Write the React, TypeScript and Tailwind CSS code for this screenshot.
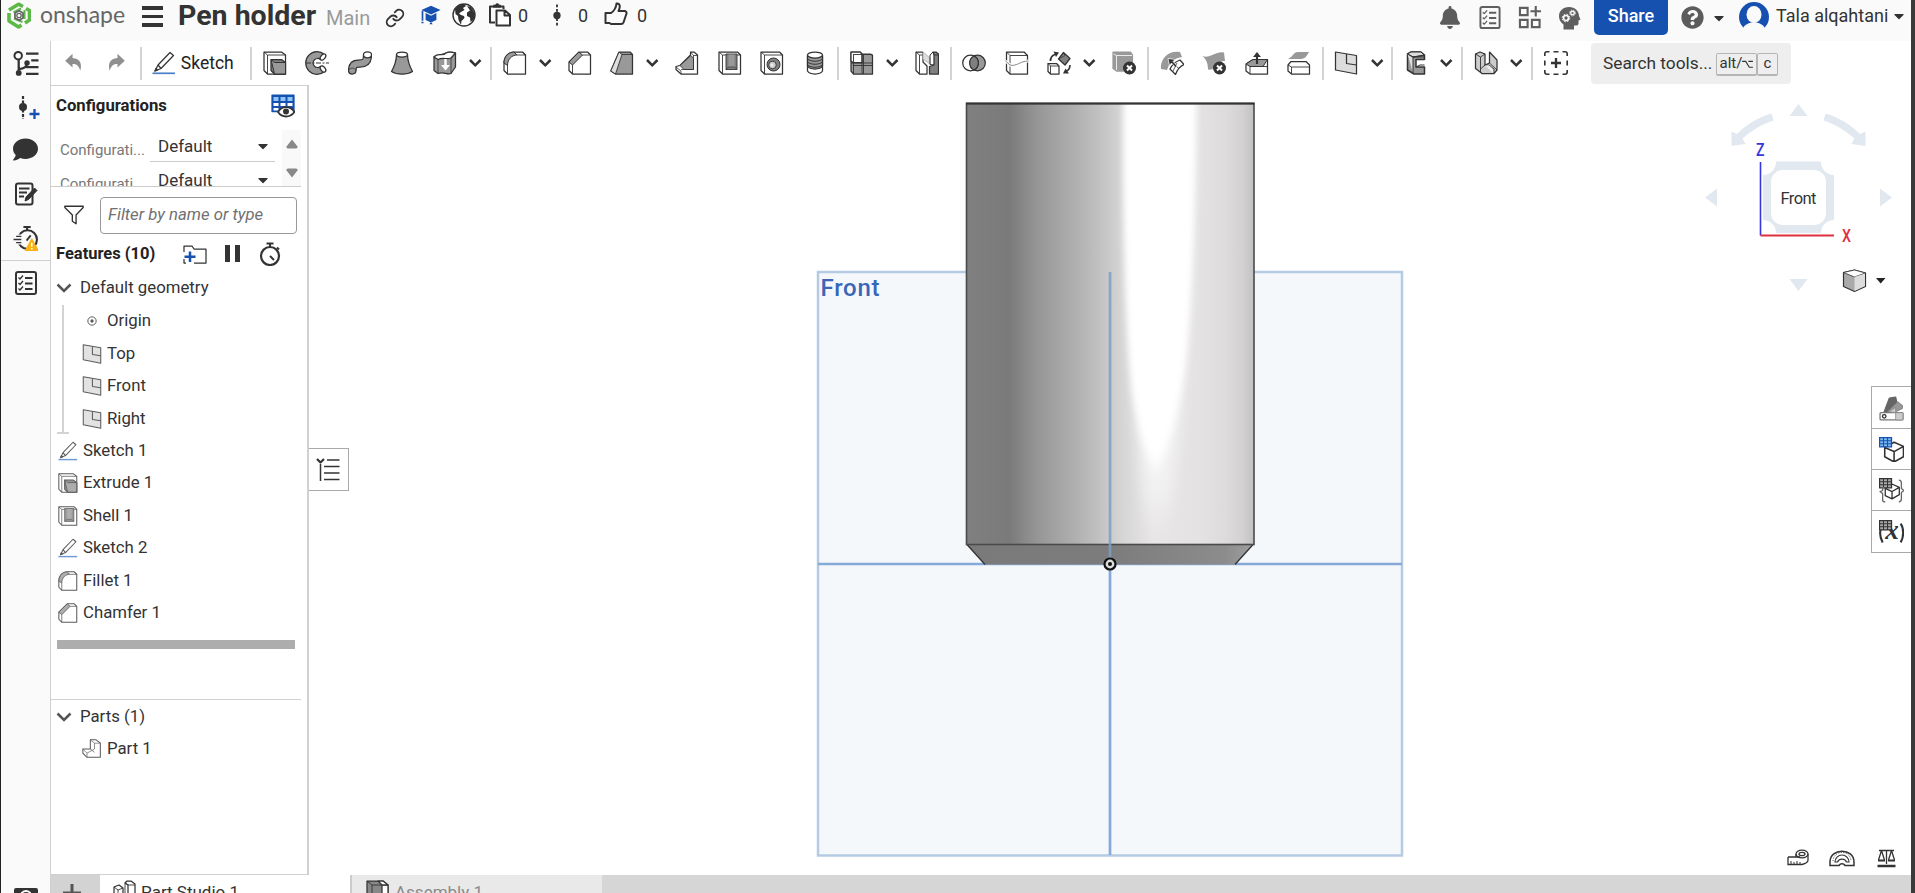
import React from "react";
import { FaBell, FaComment, FaQuestionCircle, FaCaretDown } from "react-icons/fa";
import { Link } from "lucide-react";

type Kids = { children: React.ReactNode };
const D = "#333333";
const G = "#999999";

function Ico({ children, cls = "h-6 w-6" }: Kids & { cls?: string }) {
  return (
    <svg viewBox="0 0 24 24" className={`${cls} shrink-0`} fill="none" stroke={D} strokeWidth="1.25" strokeLinejoin="round">
      {children}
    </svg>
  );
}

const Pencil = () => (
  <>
    <path d="M3 20 L6 14 L18 1.5 L21.500 4.500 L9 17.500 Z M6 14 L9 17.500" fill="#fff" />
    <path d="M3 20 L4 17.500 L5.500 19 Z" fill={D} />
    <path d="M0.500 22.300 H23" stroke="#4a7fcb" strokeWidth="1.700" />
  </>
);
const Extrude = () => (
  <>
    <path d="M1 1 H18.500 L22.500 4 V23 H4.500 L1 19.500 Z" fill="#fff" />
    <path d="M1 1 L4.500 4 H22.500 M4.500 4 V23" strokeWidth=".9" />
    <path d="M8 8.500 H18.500 L22.500 11.500 V23 H11.500 L8 19.500 Z" fill="#808080" />
    <path d="M8 8.500 L11.500 11.500 H22.500 V23 H11.500 Z" fill={G} strokeWidth="1" />
  </>
);
const Revolve = () => (
  <>
    <path d="M19.500 3.500 A11.300 11.300 0 1 0 19.500 20.500 C21.500 18.500 18.500 14 15.500 15.500 A4.500 4.500 0 1 1 15.500 8.500 C18 10 21.500 5.500 19.500 3.500 Z" fill={G} />
    <ellipse cx="18" cy="6" rx="2.200" ry="3.500" transform="rotate(40 18 6)" fill="#fff" />
    <ellipse cx="18" cy="18" rx="2.200" ry="3.500" transform="rotate(-40 18 18)" fill="#fff" />
    <path d="M1 12 H24" strokeDasharray="5 1.500 2 1.500" strokeWidth="1" />
  </>
);
const Sweep = () => (
  <>
    <path d="M15.500 4 C15.500 9 15 9 10 9 C3 9 0.500 13 0.500 20 C1 24 7.500 24 8 20 C8 16 8.500 16 12 16 C20 16 23.500 12 23.500 4 Z" fill={G} />
    <ellipse cx="19.500" cy="3.800" rx="4" ry="3" fill="#fff" />
    <path d="M0.800 19 C2 16.500 7 16.500 8 19.500" strokeWidth=".8" />
  </>
);
const Loft = () => (
  <>
    <path d="M6.500 3.500 C6.500 10 4.500 15 1.500 20.500 C7 24 17 24 22.500 20.500 C19.500 15 17.500 10 17.500 3.500 Z" fill={G} />
    <ellipse cx="12" cy="3.500" rx="5.500" ry="2.500" fill="#fff" />
  </>
);
const Thicken = () => (
  <>
    <path d="M1 6 C5 1 9 6 13 2 C16 0 19 1 22.500 2 L22.500 16 L18 22.500 C14 24 10 20 5 22.500 L1 19.500 Z" fill={G} />
    <path d="M1 6 C5 1 9 6 13 2 C16 0 19 1 22.500 2 L18 7 C14 9 10 6 5 8.500 Z" fill="#fff" />
    <path d="M5 8.500 V22.500 M18 7 V22.500" strokeWidth=".8" />
    <path d="M12.500 8 V16" stroke="#fff" strokeWidth="2.400" />
    <path d="M8 14 H17 L12.500 19.500 Z" fill="#fff" stroke="none" />
  </>
);
const Fillet = () => (
  <>
    <path d="M1 12 C1 5 6 1 11 1 H19.500 L22.500 4 V23 H4.500 L1 19.500 Z" fill="#fff" />
    <path d="M1 12 C1 5 6 1 11 1 L14 4 C9 4 4.500 8 4.500 14.500 Z" fill={G} strokeWidth="1" />
    <path d="M4.500 14.500 V23 M14 4 H22.500 M19.500 1 L22.500 4" strokeWidth=".9" />
  </>
);
const Chamfer = () => (
  <>
    <path d="M1 11 L11 1 H19.500 L22.500 4 V23 H4.500 L1 19.500 Z" fill="#fff" />
    <path d="M1 11 L11 1 L14.500 4 L4.500 14 Z" fill={G} strokeWidth="1" />
    <path d="M4.500 14 V23 M14.500 4 H22.500" strokeWidth=".9" />
  </>
);
const Draft = () => (
  <>
    <path d="M9 1 H20 L22.500 3.500 V23 H5.500 L0.800 20 Z" fill={G} />
    <path d="M9 1 L12 3.500 L5.500 23 L0.800 20 Z" fill="#ddd" strokeWidth=".9" />
    <path d="M12 3.500 H22.500" strokeWidth=".9" />
  </>
);
const Rib = () => (
  <>
    <path d="M15.500 1 L19 1 L22.500 4 V23 H6 L1 18.500 V15.500 L5 14.500 L15.500 4 Z" fill="#fff" />
    <path d="M5 14.500 L16 4.500 L18.500 7.500 V18.500 H9 Z" fill={G} strokeWidth=".9" />
    <path d="M15.500 1 L18.500 4.500 H22.500 M1 16 L6 20 V23 M18.500 4 V18.500 H6" strokeWidth=".8" />
  </>
);
const Shell = () => (
  <>
    <path d="M1 1 H19.500 L22.500 4 V23 H4.500 L1 19.500 Z" fill="#fff" />
    <path d="M1 1 L4.500 4 H22.500 M4.500 4 V23" strokeWidth=".9" />
    <path d="M8 3 H19 V18.500 H8 Z" fill="#808080" strokeWidth=".9" />
    <path d="M10.500 3.500 H16.500 V16 H10.500 Z" fill={G} stroke="none" />
    <path d="M8 18.500 L10.500 16 H16.500 L19 18.500" strokeWidth=".7" />
  </>
);
const Hole = () => (
  <>
    <path d="M1 1 H19.500 L22.500 4 V23 H4.500 L1 19.500 Z" fill="#fff" />
    <path d="M1 1 L4.500 4 H22.500 M4.500 4 V23" strokeWidth=".9" />
    <circle cx="13.500" cy="13.500" r="6.500" fill="#808080" strokeWidth="1" />
    <circle cx="12.500" cy="14" r="3.800" fill="#ccc" strokeWidth=".9" />
    <circle cx="12" cy="14" r="1.500" fill="#eee" stroke="none" />
  </>
);
const Thread = () => (
  <>
    <path d="M4.500 4 V20 C7 24 17 24 19.500 20 V4 Z" fill="#fff" />
    <path d="M4.500 5 V15 C7 19 17 19 19.500 15 V5 Z" fill={G} />
    <ellipse cx="12" cy="4" rx="7.500" ry="3" fill="#fff" />
    <path d="M4.500 8 C8 11 16 11 19.500 8 M4.500 11 C8 14 16 14 19.500 11 M4.500 14 C8 17 16 17 19.500 14" strokeWidth="1" />
  </>
);
const Pattern = () => (
  <>
    <path d="M1 1 H10 L12 3 H20.500 L22.500 4.500 V23 H3.500 L1 20 Z" fill={G} />
    <path d="M1 1 H10 L12 3 V11.500 H3 L1 10 Z" fill="#fff" />
    <path d="M12 3 V23 M3 3.500 H22.500 M1 12 H22.500 M3 14.500 H22.500 M3.500 3.500 V23 M13.500 3 V23" strokeWidth=".9" />
  </>
);
const Mirror = () => (
  <>
    <path d="M1 1 H7 L8 2 V11 L12 15 V23 H4.500 L1 19.500 Z" fill="#fff" />
    <path d="M1 1 L4.500 4 V23 M4.500 4 H8 M8 11 L12 15" strokeWidth=".9" />
    <path d="M8 1 L15 7 V13 L8 8 Z" fill="#ddd" stroke="#aaa" strokeWidth=".8" />
    <path d="M18 1 H21 L23.500 3 V23 H14.500 V15.500 L19 14 V4 Z" fill="#808080" />
    <path d="M18 1 L15 4 V13.500 L19 14 M19 4 H23.500" strokeWidth="1" />
  </>
);
const Bool = () => (
  <>
    <circle cx="15.500" cy="12" r="7.800" fill={G} />
    <circle cx="8.500" cy="12" r="7.800" fill="#fff" />
    <path d="M12 5 A7.800 7.800 0 0 1 12 19 A7.800 7.800 0 0 1 12 5 Z" fill="#808080" />
  </>
);
const Split = () => (
  <>
    <path d="M1.500 1 H19 L22.500 4.500 V23 H5 L1.500 19.500 Z" fill="#fff" />
    <path d="M1.500 1 L5 4.500 H22.500 M5 4.500 V23" strokeWidth=".9" />
    <path d="M0.500 10 L5 14 C11 16 15 10 23.500 10" stroke="#fff" strokeWidth="3" />
    <path d="M0.500 10 L5 14 C11 16 15 10 23.500 10" stroke="#888" strokeWidth="1" />
  </>
);
const Transform = () => (
  <>
    <path d="M1 12.500 H9.500 L12 15 V23 H3.500 L1 20.500 Z" fill="#fff" />
    <path d="M1 12.500 L3.500 15 H12 M3.500 15 V23" strokeWidth=".9" />
    <path d="M16.500 1.500 L23 7.500 L18 14 L11.500 8 Z" fill="#808080" />
    <path d="M16.500 1.500 L18 4.500 L11.500 8" strokeWidth=".7" />
    <path d="M3.500 10 C3.500 6 5 4.500 8 3.500" strokeWidth="1.800" />
    <path d="M6.500 0.500 L12 1.500 L9 6 Z" fill={D} stroke="none" />
    <path d="M23 14 C23 17 22 19 19.500 20" strokeWidth="1.600" />
    <path d="M16 22.500 L18.500 17.500 L22 22.500 Z" fill={D} stroke="none" />
  </>
);
const Cross = () => (
  <>
    <circle cx="17.500" cy="17" r="6.500" fill={D} stroke="none" />
    <path d="M15 14.500 L20 19.500 M20 14.500 L15 19.500" stroke="#fff" strokeWidth="2" />
  </>
);
const DeletePart = () => (
  <>
    <path d="M1 1 H18.500 L20.500 4 V20 H4.500 L1 17.500 Z" fill={G} stroke={G} />
    <path d="M1.500 3 L4.500 4.500 H20 M4.500 4.500 V19" stroke="#fff" strokeWidth=".8" />
    <Cross />
  </>
);
const MoveFace = () => (
  <>
    <path d="M1 18 C0 8 8 -1 20 1 L22 6 C19 6.500 17 7 15 8.500 L8 7 L9 14 L7 19 Z" fill={G} stroke="none" />
    <path d="M10 18 C12 13.500 15 11 20 9 L24 13.500 C20 15 17.500 18 15.500 23.500 Z" fill="#fff" />
    <path d="M14.500 13 L19 18 M12.500 21 L17 12" strokeWidth=".8" />
    <path d="M8 7.500 L15 8.500 L13 10.500 L17 15 L15.500 16.500 L11.500 12 L9.500 14.500 Z" fill={D} stroke="#fff" strokeWidth=".6" />
  </>
);
const DeleteFace = () => (
  <>
    <path d="M0.500 5 C8 8 13 0 22 1.500 L23 10 C14 10 15 20 6 18.500 C6 12 4 8 0.500 5 Z" fill={G} stroke="none" />
    <Cross />
  </>
);
const Extract = () => (
  <>
    <path d="M1 13 L8 8.500 H22.500 V23 H5 L1 20 Z" fill="#fff" />
    <path d="M1 13 L8 8.500 H22.500 L18 15.500 H5 Z" fill={G} strokeWidth="1" />
    <path d="M5 15.500 V23 M5 15.500 H22.500" strokeWidth=".9" />
    <path d="M12 13 V5" strokeWidth="2.200" />
    <path d="M8 6 L12 1 L16 6 Z" fill={D} stroke="none" />
  </>
);
const Replace = () => (
  <>
    <path d="M1 8 C7 5 6 1 11 1 H22 C19 6 18 8 13 8 Z" fill={G} stroke="none" />
    <path d="M1 14 L4 10.500 H19 L22.500 14 V23 H4.500 L1 20 Z" fill="#fff" />
    <path d="M1 14 L4.500 16 H22.500 M4.500 16 V23" strokeWidth=".9" />
  </>
);
const Plane = () => (
  <>
    <path d="M1.500 1 L22.500 4.500 V23 L1.500 19 Z" fill="#dcdcdc" />
    <path d="M12.500 3 V12.500 L22.500 14" />
  </>
);
const Sheet = () => (
  <>
    <path d="M3.500 3 L7 1 H17 L20.500 4 V8.500 H12 V16 H20.500 V23 H10 L3.500 19 Z" fill={G} strokeWidth="1.500" />
    <path d="M3.500 3 L9 6 V22 M9 6 L20.500 4.500 M3.500 3 L7 1 H17 L20 4 L9 6 Z" fill="#ddd" strokeWidth="1" />
    <path d="M9 6 H20.500 M12 16 L16 14 H20.500" strokeWidth="1" />
  </>
);
const Frame = () => (
  <>
    <path d="M1.500 3 L6 1 L11 3 V14 L15.500 12 V1 L23 9 V19 L20 22.500 H8 L1.500 17.500 Z" fill="#ccc" />
    <path d="M1.500 3 L6.500 6 V21 M6.500 6 L11 3 M6.500 18 L11 14 H15 L20 18 V22.500 M15.500 12 L23 19" strokeWidth=".9" />
    <path d="M11 14.500 H15 L19 18.500 V22 Z" fill="#eee" stroke="none" />
  </>
);
const AddTool = () => (
  <>
    <path d="M0.800 5 V3 Q0.800 .8 3 .8 H5.500 M9.500 .8 H14.500 M18.500 .8 H21 Q23.200 .8 23.200 3 V5 M23.200 9.500 V14.500 M23.200 19 V21 Q23.200 23.200 21 23.200 H18.500 M14.500 23.200 H9.500 M5.500 23.200 H3 Q.8 23.200 .8 21 V19 M.8 14.500 V9.500" strokeWidth="1.600" />
    <path d="M12 7 V17 M7 12 H17" strokeWidth="2.300" />
  </>
);
const PartIcon = () => (
  <>
    <path d="M10 1 H17 L22 5 V22 H6 L1 17 V12 H10 Z" fill="#fff" />
    <path d="M10 1 L15 5 H22 M15 5 V12 L6 17 L1 12 M6 17 V22 M10 12 L15 16" strokeWidth=".8" />
  </>
);
const Undo = () => <path d="M3.500 9.500 L11.500 2 V6.500 C20 7 22 13 20 20.500 C18.500 15 16 13 11.500 13 V17 Z" fill="#8f8f8f" stroke="none" />;
const Checklist = ({ c = D }: { c?: string }) => (
  <g stroke={c}>
    <rect x="2" y="1" width="20" height="22" rx="2" strokeWidth="2" />
    <path d="M11 7 H18.500 M11 12.500 H18.500 M11 18 H18.500" strokeWidth="2" />
    <path d="M4.500 6.500 L6 8 L9 4.500 M4.500 12 L6 13.500 L9 10 M4.500 17.500 L6 19 L9 15.500" strokeWidth="1.300" />
  </g>
);
const Stopwatch = () => (
  <>
    <circle cx="12" cy="14" r="9" strokeWidth="2.200" />
    <path d="M8.500 1.500 H15.500 M12 1 V5 M19 5.500 L21 7.500" strokeWidth="2" />
    <path d="M12 14 L16 18" strokeWidth="2" />
  </>
);

const Slot = ({ children }: Kids) => (
  <div className="flex w-[42.5px] shrink-0 items-center justify-center"><Ico>{children}</Ico></div>
);
const Chev = () => (
  <div className="flex w-[22.5px] shrink-0 items-center">
    <svg viewBox="0 0 18.5 12" className="h-3 w-[18.5px]" fill="none" stroke={D} strokeWidth="2.500"><path d="M4 3 L9.250 8.300 L14.500 3" /></svg>
  </div>
);
const Sep = () => <div className="flex w-[4.8px] shrink-0 justify-center"><div className="h-[33px] w-[2px] bg-[#d3d3d3]" /></div>;

function Header() {
  return (
    <header className="flex h-[41px] shrink-0 bg-[#fafafa] text-[#333]">
      <div className="flex h-[33px] flex-1 items-center">
        <svg viewBox="0 0 24 27" className="ml-[6px] h-[27px] w-6 shrink-0 -mt-[3px]" fill="none" strokeLinejoin="round">
          <path d="M2 8 L11.500 2.200 L16 4.500 M19 6.500 L22.500 8.500 V18 L18 21 M14.500 23 L11.500 25 L2 19 V11" stroke="#5cb947" strokeWidth="3.600" />
          <path d="M6.500 10.500 L14 6.500 M17.500 8 V17 M15.500 20 L7 16.500" stroke="#5cb947" strokeWidth="2" />
          <path d="M8 11 L12 8.800 L16 11 V16 L12 18.300 L8 16 Z" stroke="#666" strokeWidth="1.800" />
          <circle cx="12" cy="13.500" r="2.200" stroke="#666" strokeWidth="1.300" />
        </svg>
        <span className="ml-[9px] -mt-[5px] w-[102px] shrink-0 font-['Lato'] text-[23px] leading-[30px] text-[#666]">onshape</span>
        <div className="flex w-[21px] shrink-0 flex-col gap-[5px]"><i className="h-[3.500px] bg-[#333]" /><i className="h-[3.500px] bg-[#333]" /><i className="h-[3.500px] bg-[#333]" /></div>
        <span className="ml-[15px] mt-[-2px] w-[148px] shrink-0 whitespace-nowrap text-[28.5px] leading-[34px] font-bold">Pen holder</span>
        <span className="w-[58px] shrink-0 text-[20px] text-[#999] mt-[3px]">Main</span>
        <Link className="ml-px h-5 w-5 shrink-0 text-[#333] mt-[2px]" strokeWidth={2.2} />
        <Ico cls="ml-[14px] -mt-[4px] h-[20px] w-6">
          <path d="M12 1 L23.500 6 L12 11.500 L0.500 6 Z" fill="#1651b0" stroke="none" />
          <path d="M5.500 9.500 V18 L12 21 L18.500 18 V9.500 L12 13 Z M12 20 L14 23 H10 Z" fill="#1651b0" stroke="none" />
          <path d="M1.800 7 V19 M0.500 21 H3" stroke="#1651b0" strokeWidth="2" />
        </Ico>
        <Ico cls="ml-[9px] h-6 w-6 -mt-[3px]">
          <circle cx="12" cy="12" r="11" fill="#fff" strokeWidth="1.400" />
          <path d="M3 6 C5 3 8 1 12 1 L14 3 L11 5 L12.500 7 L9 9 L7 10.500 L9 12 L12 13 L12.500 15 L9.500 18 L9 22 L6.500 17 L6 13 L3.500 11 Z M15 3 L19 4 L21.500 8 L23 12 L21.500 17 L18.500 19 L18 14.500 L15 13 L15 9.500 L18 7.500 Z" fill={D} stroke="none" />
        </Ico>
        <Ico cls="ml-3 h-6 w-6 -mt-[3px]">
          <path d="M7 19.500 H2 V3.500 H6 M12 3.500 H15.500 V6" strokeWidth="2" />
          <path d="M5.500 4.500 V2 H7.500 A1.800 1.800 0 0 1 11 2 H12.500 V4.500 Z" fill={D} strokeWidth=".6" />
          <path d="M8.500 7.500 H17 L22 12 V22.500 H8.500 Z M16.500 7.500 V12.500 H22" fill="#fff" strokeWidth="2" />
        </Ico>
        <span className="ml-[6px] w-[28px] text-[18px] -mt-[2px]">0</span>
        <Ico cls="h-[23px] w-[22px] -mt-[3px]"><path d="M12 0 V24" strokeDasharray="3 2" strokeWidth="2" /><circle cx="12" cy="12" r="4" fill={D} stroke="none" /></Ico>
        <span className="ml-[10px] w-[26px] text-[18px] -mt-[2px]">0</span>
        <Ico cls="h-6 w-6 -mt-[5px]"><path d="M1.500 11 H7 C10 9 12 6 12.500 1.500 C15.500 1 17 4 14.500 9 H21 C23.500 10 22.500 12 22 13 L19.500 20.500 C19 22 18 22 17 22 H7 L5.500 21 H1.500 Z" strokeWidth="2" /></Ico>
        <span className="ml-[9px] text-[18px] -mt-[2px]">0</span>
      </div>
      <div className="flex h-[35px] items-center text-[#5c5c5c]">
        <FaBell className="h-[23px] w-5 shrink-0" />
        <Ico cls="ml-[18px] h-[23px] w-6"><Checklist c="#5f5f5f" /></Ico>
        <svg viewBox="0 0 24 24" className="ml-4 h-[23px] w-6" fill="none" stroke="#5f5f5f" strokeWidth="2.200"><path d="M1.500 2 H9.500 V9.500 H1.500 Z M1.500 14.500 H9.500 V22 H1.500 Z M14 14.500 H22 V22 H14 Z M18 0 V11 M12.500 5.500 H23.500" /></svg>
        <svg viewBox="0 0 24 24" className="ml-[15px] h-[24px] w-[24px]" fill="none" stroke="#fafafa">
          <path d="M12 1 C18 1 22 5 22 10 L23.500 13.500 L21.500 14.500 V18 Q21 19.500 19 19.500 H17 V23.500 H6.500 V18.500 C3 16 2 13 2 10 C2 5 6 1 12 1 Z" fill="#5f5f5f" stroke="none" />
          <circle cx="9" cy="12" r="2.500" strokeWidth="1.700" /><circle cx="9" cy="12" r="3.800" strokeWidth="1" strokeDasharray="1.600 1.400" />
          <circle cx="15.500" cy="7" r="1.800" strokeWidth="1.400" /><circle cx="15.500" cy="7" r="2.900" strokeWidth=".9" strokeDasharray="1.300 1" />
        </svg>
        <div className="ml-[13px] flex h-full w-[74px] items-center justify-center rounded-b-[5px] bg-[#1651b0] pb-[3px] text-[18px] font-medium text-white">Share</div>
        <FaQuestionCircle className="ml-[13px] h-[23px] w-[23px]" />
        <FaCaretDown className="ml-[7px] h-4 w-4 text-[#333]" />
        <svg viewBox="0 0 30 30" className="ml-[12px] h-[30px] w-[30px] -mt-px"><circle cx="15" cy="15" r="15" fill="#1651b0" /><ellipse cx="15" cy="12.500" rx="7.500" ry="8.500" fill="#fafafa" /><path d="M3 30 C4 22 10 21 15 20 C20 21 26 22 27 30 Z" fill="#fafafa" /></svg>
        <span className="ml-[7px] w-[115px] shrink-0 whitespace-nowrap text-[18px] text-[#333] -mt-[3px]">Tala alqahtani</span>
        <FaCaretDown className="mr-[4px] h-4 w-4 text-[#333] -mt-1" />
      </div>
    </header>
  );
}

function Toolbar() {
  return (
    <div className="flex h-[44px] shrink-0 items-center">
      <div className="flex w-11 shrink-0 justify-center"><Ico cls="h-[22px] w-6"><Undo /></Ico></div>
      <div className="flex w-11 shrink-0 justify-center"><Ico cls="h-[22px] w-6 -scale-x-100"><Undo /></Ico></div>
      <Sep />
      <div className="flex w-[105px] shrink-0 items-center pl-[8px]"><Ico><Pencil /></Ico><span className="ml-[5px] text-[17.5px] text-[#222]">Sketch</span></div>
      <Sep />
      <Slot><Extrude /></Slot><Slot><Revolve /></Slot><Slot><Sweep /></Slot><Slot><Loft /></Slot><Slot><Thicken /></Slot><Chev />
      <Sep />
      <Slot><Fillet /></Slot><Chev /><Slot><Chamfer /></Slot><Slot><Draft /></Slot><Chev />
      <Slot><Rib /></Slot><Slot><Shell /></Slot><Slot><Hole /></Slot><Slot><Thread /></Slot>
      <Sep />
      <Slot><Pattern /></Slot><Chev /><Slot><Mirror /></Slot>
      <Sep />
      <Slot><Bool /></Slot><Slot><Split /></Slot><Slot><Transform /></Slot><Chev /><Slot><DeletePart /></Slot>
      <Sep />
      <Slot><MoveFace /></Slot><Slot><DeleteFace /></Slot><Slot><Extract /></Slot><Slot><Replace /></Slot>
      <Sep />
      <Slot><Plane /></Slot><Chev />
      <Sep />
      <Slot><Sheet /></Slot><Chev />
      <Sep />
      <Slot><Frame /></Slot><Chev />
      <Sep />
      <Slot><AddTool /></Slot>
      <div className="ml-[14px] flex h-[41px] w-[200px] items-center rounded bg-[#eeeeee] pl-[12px] text-[#333]">
        <span className="w-[113px] shrink-0 whitespace-nowrap text-[17.3px]">Search tools...</span>
        <kbd className="mt-[3px] flex h-[23px] w-[41px] items-center justify-center rounded-[2px] border border-b-2 border-[#b5b5b5] font-['Roboto'] text-[15px]">alt/<svg viewBox="0 0 12 10" className="h-[9px] w-[11px]" fill="none" stroke={D} strokeWidth="1.200"><path d="M0 1.500 H4 L8 8 H12 M7 1.500 H12" /></svg></kbd>
        <kbd className="mt-[3px] flex h-[23px] w-[21px] items-center justify-center rounded-[2px] border border-b-2 border-[#b5b5b5] font-['Roboto'] text-[15px]">c</kbd>
      </div>
    </div>
  );
}

const RailItem = ({ children, h }: Kids & { h: string }) => <div className={`flex items-center justify-center ${h}`}>{children}</div>;

function Rail() {
  return (
    <aside className="flex w-[50px] shrink-0 flex-col border-r border-[#d0d0d0] bg-[#fafafa]">
      <RailItem h="h-[44px]">
        <Ico cls="h-[25px] w-[26px]"><circle cx="4.500" cy="4.500" r="3.600" strokeWidth="1.900" /><circle cx="5" cy="21" r="2.800" fill={D} stroke="none" /><circle cx="13" cy="11.500" r="2.600" fill={D} stroke="none" /><path d="M5 8 V19 M13 11.500 C13 16 9 17 5 17.500 M12 2.500 H24 M17 9 H24 M12 15.500 H24 M12 22 H24" strokeWidth="2.200" /></Ico>
      </RailItem>
      <RailItem h="h-[43px]">
        <Ico cls="ml-1 h-6 w-6"><path d="M7 1 V24" strokeDasharray="3 1.500" strokeWidth="2.200" /><circle cx="7" cy="12" r="4" fill={D} stroke="none" /><path d="M18.500 14 V24 M13.500 19 H23.500" stroke="#1651b0" strokeWidth="2.300" /></Ico>
      </RailItem>
      <RailItem h="h-[43px]"><FaComment className="h-[25px] w-[25px] text-[#333]" /></RailItem>
      <RailItem h="h-[46px]">
        <Ico><rect x="2" y="1.500" width="16.500" height="21" rx="2" strokeWidth="2" /><path d="M5 6.500 H15.500 M5 10.500 H13 M5 14.500 H10" strokeWidth="1.800" /><path d="M11 19 L12 15 L20.500 6 L23 8.500 L14.500 17.500 Z" fill={D} strokeWidth="1" /></Ico>
      </RailItem>
      <RailItem h="h-[42px]">
        <Ico cls="h-[25px] w-[25px]"><circle cx="14" cy="13" r="9" strokeWidth="2" /><path d="M10 1 H17 M13.500 1 V4" strokeWidth="2" /><path d="M13 14 L17 9" strokeWidth="1.800" /><path d="M3 10 H9 M0 13 H9 M3 16 H9" stroke="#fafafa" strokeWidth="3.500" /><path d="M3 10 H8 M0.500 13 H8 M3 16 H8" strokeWidth="1.300" /><path d="M18 12.500 L24 23.500 H12 Z" fill="#f9b212" stroke="#f9b212" /><path d="M18 16 V20 M18 21.200 V22.500" stroke="#fff" strokeWidth="1.500" /></Ico>
      </RailItem>
      <div className="mt-px h-px bg-[#d0d0d0]" />
      <RailItem h="h-[43px]"><Ico><Checklist /></Ico></RailItem>
      <div className="mt-auto flex h-[5px] justify-center overflow-hidden"><div className="flex h-5 w-6 justify-center rounded-t-[2px] bg-[#333]"><div className="mt-[2px] h-3 w-3 rounded-full border-2 border-white" /></div></div>
    </aside>
  );
}

const Row = ({ icon, label, nested }: { icon: React.ReactNode; label: string; nested?: boolean }) => (
  <div className={nested ? "flex h-[32.5px] items-center pl-[31px]" : "flex h-[32.5px] items-center pl-[7px]"}>
    <Ico cls="h-5 w-5 opacity-80">{icon}</Ico>
    <span className={nested ? "ml-[5px]" : "ml-[5px]"}>{label}</span>
  </div>
);

const ConfigRow = () => (
  <div className="flex h-[34px] shrink-0 items-center">
    <span className="w-[92px] pt-[9px] pl-[9px] text-[15px] leading-[18px] whitespace-nowrap text-[#777]">Configurati...</span>
    <div className="ml-[7px] flex h-[34px] w-[125px] items-center justify-between border-b border-[#ccc] pt-[3px] pr-[4px] pl-[8px] text-[17px]"><span>Default</span><FaCaretDown className="h-4 w-4" /></div>
  </div>
);

const DownArrow = () => <svg viewBox="0 0 16 12" className="h-3 w-4" fill="none" stroke="#555" strokeWidth="2.500"><path d="M1.500 2.500 L8 9 L14.500 2.500" /></svg>;

function Panel() {
  return (
    <section className="flex w-[258px] shrink-0 flex-col border-t border-r-2 border-b border-[#d0d0d0] bg-white text-[16.8px] text-[#333]">
      <div className="flex h-[41px] shrink-0 items-center justify-between pr-[12px] pb-[2px] pl-[5px] text-[16.7px] font-bold">
        <span className="text-[#222]">Configurations</span>
        <Ico><path d="M1 1 H23 V17.500 H1 Z" fill="#1651b0" stroke="#1651b0" /><path d="M2.500 3 H7.500 V7 H2.500 Z M9.500 3 H14.500 V7 H9.500 Z M16.500 3 H21.500 V7 H16.500 Z" fill="#8ec6f5" stroke="none" /><path d="M2.500 9 H7.500 V12 H2.500 Z M9.500 9 H14.500 V12 H9.500 Z M16.500 9 H21.500 V12 H16.500 Z M2.500 14 H7.500 V16.500 H2.500 Z" fill="#fff" stroke="none" /><path d="M7 18 C11 11.500 19 11.500 23.500 18 C19 24 11 24 7 18 Z" fill="#fff" strokeWidth="1.800" /><circle cx="15" cy="17.500" r="3" fill={D} stroke="none" /></Ico>
      </div>
      <div className="flex h-[60px] w-[250px] shrink-0 overflow-hidden border-b border-[#ccc]">
        <div className="flex w-[231px] flex-col pt-px"><ConfigRow /><ConfigRow /></div>
        <div className="mt-[3px] flex flex-1 flex-col items-center justify-between bg-[#f9f9f9] pt-[9px] pb-[8px]">
          <svg viewBox="0 0 12 9" className="h-[10px] w-3 fill-[#888]"><path d="M6 0 L11.500 7 Q12 9 10 9 H2 Q0 9 .5 7 Z" /></svg>
          <svg viewBox="0 0 12 9" className="h-[10px] w-3 fill-[#888]"><path d="M6 9 L11.500 2 Q12 0 10 0 H2 Q0 0 .5 2 Z" /></svg>
        </div>
      </div>
      <div className="flex h-[55px] shrink-0 items-center pt-px pl-[13px]">
        <Ico cls="h-5 w-5"><path d="M1 1.500 H23 V3 L14.500 12 V22.500 L10 19.500 V12 L1 3 Z" strokeWidth="1.600" /></Ico>
        <div className="ml-[16px] flex h-[37px] w-[197px] items-center rounded-[4px] border border-[#999] pl-[7px] text-[16.7px] text-[#707070] italic">Filter by name or type</div>
      </div>
      <div className="mt-[-4px] flex h-[31px] shrink-0 items-center pl-[5px]">
        <span className="w-[127px] text-[16.500px] font-bold text-[#222]">Features (10)</span>
        <Ico><path d="M1 10 V4 H9 L11 7 H23 V21 H11 M1 17 V21 H3" /><path d="M7 9.500 V20 M1.500 14.700 H12.500" stroke="#1651b0" strokeWidth="2.500" /></Ico>
        <div className="ml-[18px] flex gap-[5px]"><i className="h-[17px] w-[5px] bg-[#333]" /><i className="h-[17px] w-[5px] bg-[#333]" /></div>
        <Ico cls="ml-[18px] h-6 w-6"><Stopwatch /></Ico>
      </div>
      <div className="mt-px flex h-[35px] shrink-0 items-center pl-[5px]"><DownArrow /><span className="ml-[8px]">Default geometry</span></div>
      <div className="relative h-[127.5px] shrink-0">
        <div className="absolute top-0 left-[11px] h-[127px] w-[2px] bg-[#d3d3d3]" />
        <div className="absolute top-[127px] left-[6px] h-[2px] w-3 bg-[#d3d3d3]" />
        <Row nested icon={<><circle cx="12" cy="12" r="5" strokeWidth="1.200" /><circle cx="12" cy="12" r="2" fill={D} stroke="none" /></>} label="Origin" />
        <Row nested icon={<Plane />} label="Top" /><Row nested icon={<Plane />} label="Front" /><Row nested icon={<Plane />} label="Right" />
      </div>
      <div className="mt-[2px] shrink-0">
        <Row icon={<Pencil />} label="Sketch 1" /><Row icon={<Extrude />} label="Extrude 1" /><Row icon={<Shell />} label="Shell 1" />
        <Row icon={<Pencil />} label="Sketch 2" /><Row icon={<Fillet />} label="Fillet 1" /><Row icon={<Chamfer />} label="Chamfer 1" />
      </div>
      <div className="mt-[10.5px] ml-[6px] h-[9px] w-[238px] shrink-0 bg-[#adadad]" />
      <div className="mt-[50px] flex h-[34px] w-[250px] shrink-0 items-center border-t border-[#d0d0d0] pl-[5px]"><DownArrow /><span className="ml-[8px]">Parts (1)</span></div>
      <Row nested icon={<PartIcon />} label="Part 1" />
    </section>
  );
}

const Grid = ({ c, f }: { c: string; f: string }) => (
  <><rect x="0.500" y="0.500" width="11.500" height="9" fill={f} stroke={c} /><path d="M4.300 0 V9.500 M8.200 0 V9.500 M0 3.500 H12 M0 6.500 H12" stroke={c} strokeWidth="1" /></>
);

function Canvas() {
  return (
    <main className="relative min-w-0 flex-1 overflow-hidden bg-white">
      <svg viewBox="309 85 1602 790" className="block h-[790px] w-[1602px]">
        <defs>
          <linearGradient id="body">
            <stop offset="0" stopColor="#808080" /><stop offset=".15" stopColor="#7a7a7a" /><stop offset=".21" stopColor="#8c8c8c" />
            <stop offset=".257" stopColor="#999898" /><stop offset=".37" stopColor="#afaeae" /><stop offset=".465" stopColor="#c3c2c2" />
            <stop offset=".54" stopColor="#d6d5d5" /><stop offset=".65" stopColor="#e7e5e6" /><stop offset=".81" stopColor="#e4e2e3" />
            <stop offset=".9" stopColor="#dddbdc" /><stop offset=".96" stopColor="#d3d1d2" /><stop offset="1" stopColor="#c2c0c1" />
          </linearGradient>
          <linearGradient id="rim"><stop offset="0" stopColor="#7a7a7a" /><stop offset=".5" stopColor="#7c7c7c" /><stop offset=".9" stopColor="#8c8c8c" /><stop offset="1" stopColor="#a0a0a0" /></linearGradient>
          <filter id="soft" x="-30%" y="-10%" width="160%" height="120%"><feGaussianBlur stdDeviation="3 7" /></filter>
          <filter id="haze" x="-80%" y="-20%" width="260%" height="140%"><feGaussianBlur stdDeviation="6 20" /></filter>
          <clipPath id="cyl"><rect x="966" y="104" width="288" height="440" /></clipPath>
        </defs>
        <rect x="818" y="272" width="584" height="583.500" fill="#f4f8fb" stroke="#b5cbe4" strokeWidth="2.500" />
        <path d="M818 564 H1402 M1110 564 V855" stroke="#86aad8" strokeWidth="2.700" />
        <path d="M966.500 544 L985 564.500 H1235 L1253.500 544 Z" fill="url(#rim)" />
        <path d="M966.500 544 L985 564.500 M1235 564.500 L1253.500 544" stroke="#333" strokeWidth="1.300" />
        <rect x="966.500" y="103.500" width="287.500" height="441" fill="url(#body)" />
        <g clipPath="url(#cyl)">
          <path d="M1128 60 C1128 280 1130 400 1144 510 H1170 C1184 420 1192 300 1192 60 Z" fill="#fff" opacity=".5" filter="url(#haze)" />
          <path d="M1124 70 C1122.500 210 1125 310 1131 380 C1136 425 1145 455 1156 470 C1170 448 1181 405 1187 350 C1193 280 1196 190 1196 70 Z" fill="#fff" filter="url(#soft)" />
        </g>
        <rect x="966.500" y="103.500" width="287.500" height="441" fill="none" stroke="#4a4a4a" strokeWidth="1.600" />
        <path d="M966 103.500 H1254.500" stroke="#333" strokeWidth="2" />
        <path d="M1110 272 V564" stroke="#7d9fc4" strokeWidth="2.700" opacity=".85" />
        <circle cx="1110" cy="564" r="5.500" fill="#ddd" stroke="#111" strokeWidth="2.200" /><circle cx="1110" cy="564" r="2" fill="#111" />
        <text x="820.500" y="295.500" fontFamily="Roboto" fontSize="24" fontWeight="500" textLength="59" fill="#3a66b8">Front</text>
      </svg>
      <div className="absolute top-[363px] left-[-2px] flex h-[43px] w-[42px] items-center justify-center border border-l-0 border-[#aaa] bg-white">
        <Ico cls="h-6 w-6"><path d="M1 1 L4.500 4.500 L8 1" strokeWidth="2.200" /><path d="M4.500 6 V23 M11 2 H23.500 M8 8.500 H23.500 M8 15 H23.500 M8 21.500 H23.500" strokeWidth="1.500" /></Ico>
      </div>
      <svg viewBox="0 0 231 220" className="absolute top-[5px] right-0 h-[220px] w-[231px]">
        <g fill="#e1e8ef">
          <path d="M118.500 14 L127.500 26 H109.500 Z M118.500 201 L127.500 189 H109.500 Z" />
          <path d="M25 107.500 L37 98.500 V116.500 Z M212 107.500 L200 98.500 V116.500 Z" />
          <path d="M91.500 23.500 L93.500 30.500 C82 34 71 41 62.500 48.500 L65.500 54 L51.500 56 V41.500 L57 44 C67 34 79 27 91.500 23.500 Z" />
          <path d="M145.500 23.500 L143.500 30.500 C155 34 166 41 174.500 48.500 L171.500 54 L185.500 56 V41.500 L180 44 C170 34 158 27 145.500 23.500 Z" />
          <path d="M96 71.500 H141 A13 13 0 0 0 154 85 V130 A13 13 0 0 0 141 143 H96 A13 13 0 0 0 83 130 V85 A13 13 0 0 0 96 71.500 Z" />
        </g>
        <rect x="91" y="80" width="55" height="55" rx="12" fill="#fff" />
        <text x="100.500" y="113.500" fontFamily="Roboto" fontSize="16.500" textLength="36" fill="#333">Front</text>
        <path d="M80.500 72 V145.500" stroke="#3636e0" strokeWidth="1.600" /><path d="M80.500 145.500 H154" stroke="#e03040" strokeWidth="1.800" />
        <text x="76" y="66" fontFamily="Roboto" fontSize="18" fontWeight="500" textLength="8.500" lengthAdjust="spacingAndGlyphs" fill="#3636e0">Z</text>
        <text x="162" y="152" fontFamily="Roboto" fontSize="18" fontWeight="500" textLength="9" lengthAdjust="spacingAndGlyphs" fill="#e03040">X</text>
        <g stroke="#333" strokeWidth="1.200" strokeLinejoin="round"><path d="M163.500 182.500 L174.500 180 L185.500 183 V196.500 L174.500 201.500 L163.500 196.500 Z" fill="#aaa" /><path d="M163.500 182.500 L174.500 180 L185.500 183 L174.500 187 Z" fill="#fff" strokeWidth=".8" /><path d="M174.500 187 L185 183.500 V196 L174.500 201 Z" fill="#ddd" stroke="none" /></g>
        <path d="M196 188 H205.500 L200.700 193.500 Z" fill="#222" />
      </svg>
      <div className="absolute top-[301px] right-0 flex w-10 flex-col border border-r-0 border-[#aaa] bg-white">
        <div className="flex h-[42px] items-center justify-center border-b border-[#aaa] pt-[2px]"><Ico cls="h-[25px] w-[25px]"><path d="M5 15 L10 2 L16 1 L17 6 L8 17 Z" fill="#666" stroke="#666" /><path d="M8 15 L18 5.500 L22.500 9 V12 L12 17 Z" fill="#999" stroke="#777" strokeWidth=".8" /><rect x="1" y="16" width="22" height="7" rx="1" fill="#fff" stroke="#777" /><path d="M16 16 H23 V23 H16 Z M9 15 L16 11 V16 Z" fill="#ccc" stroke="#888" strokeWidth=".8" /><circle cx="5" cy="19.500" r="1.700" /></Ico></div>
        <div className="flex h-[41px] items-center justify-center border-b border-[#aaa] pt-px"><Ico cls="h-[25px] w-[25px]"><path d="M5.500 10 L14.500 5 L23.500 9 V19 L14.500 24 L5.500 19 Z M5.500 10 L14.500 14 L23.500 9 M14.500 14 V24" fill="#fff" strokeWidth="1.500" /><Grid c="#1651b0" f="#7ab8f0" /></Ico></div>
        <div className="flex h-[41px] items-center justify-center border-b border-[#aaa] pt-px"><Ico cls="h-[25px] w-[25px]"><path d="M6 10 L13 6 L19.500 9 V16 L12.500 20 L6 17 Z M6 10 L12.500 13 L19.500 9 M12.500 13 V20" fill="#fff" /><Grid c="#333" f="#aaa" /><path d="M5 9 H3.500 V12 L1 13 L3.500 15 V21 Q3.500 23 6 23 M19 2 Q21.500 2 21.500 5 V10 L24 12 L21.500 14 V20 Q21.500 23 19 23" stroke="#666" /></Ico></div>
        <div className="flex h-[41px] items-center justify-center pt-px"><Ico cls="h-[25px] w-[25px]"><text x="6" y="18" fontFamily="Liberation Serif" fontSize="26" fontStyle="italic" fontWeight="700" fill={D} stroke="none">x</text><path d="M20.800 3.500 C24 8 24 16 20.800 21.500 M3.500 3.500 C0.500 9 0.500 16 3.500 21.500" strokeWidth="2" /><Grid c="#333" f="#aaa" /></Ico></div>
      </div>
      <div className="absolute right-[15px] bottom-[7px] flex items-end">
        <svg viewBox="0 0 22 17" className="mb-[2px] h-[17px] w-[22px]" fill="none" stroke={D} strokeWidth="1.300"><path d="M1 8 H13 M1 8 V15.500 H15 Q21 14 21 11 V5 M9 5 V8" /><ellipse cx="15" cy="5" rx="6" ry="3.800" /><ellipse cx="15" cy="5" rx="3" ry="1.700" /><path d="M4 15 V12 M7 15 V13 M10 15 V12 M13 15 V13" strokeWidth="1" /></svg>
        <svg viewBox="0 0 26 17" className="mb-px ml-5 h-[17px] w-[26px]" fill="none" stroke={D} strokeWidth="1.500"><path d="M1 15.500 V12 C1 -2.500 25 -2.500 25 12 V15.500 H16 A3.500 3.500 0 0 0 10 15.500 Z" /><path d="M6 12 A7 7 0 0 1 20 12 H17.500 A5 5 0 0 0 8.500 12 Z" strokeWidth="1.200" /><path d="M4 11 A9 8.500 0 0 1 22 11" strokeDasharray="1 1.500" strokeWidth="1" /></svg>
        <svg viewBox="0 0 19 19" className="ml-[22px] h-[19px] w-[19px]" fill="none" stroke={D} strokeWidth="1.300"><path d="M2 1.500 H17 M9.500 1.500 V15 M4.500 1.500 L1.500 11 M4.500 1.500 L7.500 11 M14.500 1.500 L11.500 11 M14.500 1.500 L17.500 11" /><path d="M1 11.500 H8 M11 11.500 H18" strokeWidth="2" /><path d="M0.500 17 H18.500" strokeWidth="2.500" /></svg>
      </div>
    </main>
  );
}

function Tabs() {
  return (
    <div className="flex h-[18px] shrink-0 overflow-hidden bg-[#d6d6d6] text-[17px]">
      <div className="flex w-[49px] justify-center bg-[#d3d3d3] pr-[7px] pt-[8px]"><svg viewBox="0 0 20 20" className="h-5 w-5 shrink-0" stroke="#555" strokeWidth="3"><path d="M10 1 V19 M1 10 H19" /></svg></div>
      <div className="flex w-[250px] bg-white pl-[13px] text-[#333]"><div className="mt-[5px] flex"><Ico cls="h-6 w-6"><path d="M1 7 L6 5 L10 8 V23 H5 L1 20 Z M12 3 L14 1 H18 L22 4 V21 L15 23 V5 Z" fill="#fff" /><path d="M1 7 L5 10 V23 M5 10 L10 8 M12 3 L15 5 H22 M12 3 V23" strokeWidth=".9" /></Ico></div><span className="mt-[6px] ml-1">Part Studio 1</span></div>
      <div className="flex w-[252px] border-l-2 border-[#ccc] bg-[#e9e9e9] pl-[14px] text-[#8a8a8a]"><div className="mt-[5px] flex"><Ico cls="h-6 w-6"><path d="M1 1 H17 L22 5 V23 H6 L1 19 Z" fill="#888" /><path d="M12 1 H17 L22 5 H16 Z M16 5 H22 V23 H16 Z" fill="#fff" /><path d="M1 1 L6 5 H22 M6 5 V23" strokeWidth=".9" /></Ico></div><span className="mt-[6px] ml-[5px]">Assembly 1</span></div>
    </div>
  );
}

export default function App() {
  return (
    <div className="flex h-[893px] w-[1915px] flex-col overflow-hidden border-l border-r-4 border-l-[#222] border-r-[#3a3a3a] bg-white font-['Roboto',sans-serif] leading-[1.3]">
      <Header />
      <div className="flex min-h-0 flex-1">
        <Rail />
        <div className="flex min-w-0 flex-1 flex-col">
          <Toolbar />
          <div className="flex min-h-0 flex-1"><Panel /><Canvas /></div>
          <Tabs />
        </div>
      </div>
    </div>
  );
}
